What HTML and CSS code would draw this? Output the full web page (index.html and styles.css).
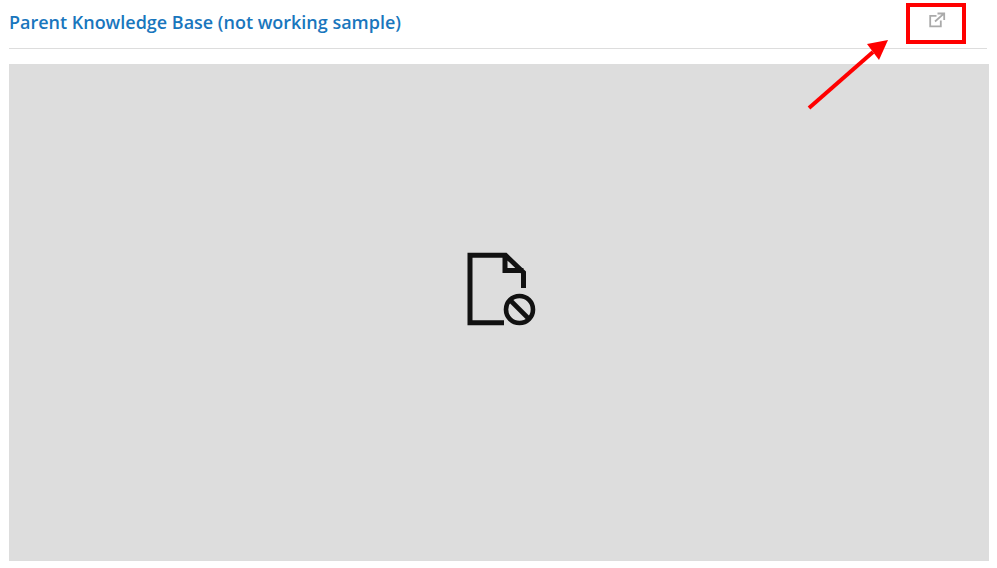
FILE: index.html
```html
<!DOCTYPE html>
<html lang="en">
<head>
<meta charset="utf-8">
<title>Parent Knowledge Base</title>
<link rel="stylesheet" href="styles.css">
</head>
<body>
<header class="header">
  <h1 class="title">Parent Knowledge Base (not working sample)</h1>
  <svg class="ext-icon" width="18" height="18" viewBox="0 0 18 18" fill="none" aria-hidden="true">
    <path d="M8.5 4.9H2.2V15.4H12.8V9.5" stroke="#aaa" stroke-width="1.8"/>
    <path d="M7 10.5 15.6 2.9M9.5 2.5H16.2V9" stroke="#aaa" stroke-width="1.8"/>
  </svg>
</header>
<main class="viewer">
  <svg class="doc-icon" width="80" height="90" viewBox="0 0 80 90" fill="none" aria-hidden="true">
    <path d="M45 78.7H11V11.2H46.5L64.5 28.5V44M46 11.2V26.5H64.5" stroke="#111" stroke-width="5"/>
    <circle cx="60.5" cy="65.5" r="13.5" stroke="#111" stroke-width="4.6"/>
    <path d="M51 56 70 75" stroke="#111" stroke-width="4.6"/>
  </svg>
</main>
<div class="callout-box"></div>
<svg class="callout-arrow" width="100" height="90" viewBox="0 0 100 90" fill="none" aria-hidden="true">
  <path d="M9 78 73 22" stroke="#f00" stroke-width="4"/>
  <path d="M88 10 67 14 79 30Z" fill="#f00"/>
</svg>
</body>
</html>
```
FILE: styles.css
```css
html, body {
  margin: 0;
  padding: 0;
  background: #fff;
}

body {
  position: relative;
  width: 997px;
  height: 568px;
  overflow: hidden;
  padding: 0 8px 0 9px;
  box-sizing: border-box;
  font-family: "Open Sans", sans-serif;
}

.header {
  display: flex;
  align-items: center;
  justify-content: space-between;
  width: 978px;
  height: 43px;
  padding-bottom: 5px;
  box-sizing: content-box;
  border-bottom: 1px solid #ddd;
}

.title {
  margin: 0;
  font-size: 17.98px;
  font-weight: 600;
  line-height: 1;
  color: #1976bd;
}

.ext-icon {
  margin-right: 41px;
  margin-bottom: 3px;
  flex: none;
}

.viewer {
  display: flex;
  align-items: center;
  justify-content: center;
  width: 980px;
  height: 497px;
  margin-top: 15px;
  padding-bottom: 47px;
  box-sizing: border-box;
  background: #ddd;
}

.callout-box {
  position: absolute;
  left: 906px;
  top: 3px;
  width: 60px;
  height: 41px;
  box-sizing: border-box;
  border: 4px solid #f00;
}

.callout-arrow {
  position: absolute;
  left: 800px;
  top: 30px;
}
```
